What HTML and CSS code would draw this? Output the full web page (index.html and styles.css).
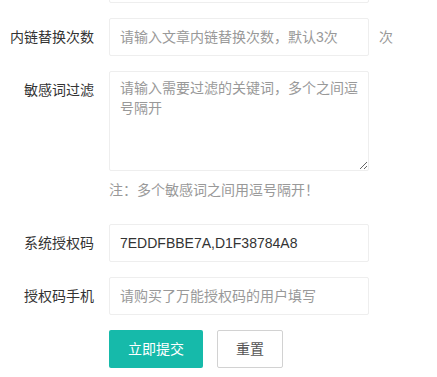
FILE: index.html
```html
<!DOCTYPE html>
<html lang="zh-CN">
<head>
    <meta charset="UTF-8">
    <meta name="viewport" content="width=device-width, initial-scale=1.0">
    <title>设置</title>
    <link rel="stylesheet" href="styles.css">
</head>
<body>
    <form class="form">
        <div class="form-item">
            <div class="form-label"></div>
            <div class="input-block">
                <input type="text" class="input">
            </div>
        </div>
        <div class="form-item">
            <label class="form-label">内链替换次数</label>
            <div class="input-block">
                <input type="text" class="input" placeholder="请输入文章内链替换次数，默认3次">
            </div>
            <div class="word-aux">次</div>
        </div>
        <div class="form-item">
            <label class="form-label">敏感词过滤</label>
            <div class="input-block">
                <textarea class="textarea" placeholder="请输入需要过滤的关键词，多个之间逗号隔开"></textarea>
                <div class="form-mid">注：多个敏感词之间用逗号隔开！</div>
            </div>
        </div>
        <div class="form-item">
            <label class="form-label">系统授权码</label>
            <div class="input-block">
                <input type="text" class="input" value="7EDDFBBE7A,D1F38784A8">
            </div>
        </div>
        <div class="form-item">
            <label class="form-label">授权码手机</label>
            <div class="input-block">
                <input type="text" class="input" placeholder="请购买了万能授权码的用户填写">
            </div>
        </div>
        <div class="form-item">
            <div class="form-label"></div>
            <div class="btns">
                <button type="button" class="btn">立即提交</button>
                <button type="reset" class="btn btn-primary">重置</button>
            </div>
        </div>
    </form>
</body>
</html>
```

FILE: styles.css
```css
body { margin: 0; font-family: "Liberation Sans", "Noto Sans CJK SC", sans-serif; font-size: 14px; color: #333; background: #fff; }
.form { margin-top: -35px; }
.form-item { display: flex; align-items: flex-start; margin-bottom: 15px; }
.form-label { width: 109px; flex: none; box-sizing: border-box; padding: 9px 15px 9px 0; line-height: 20px; text-align: right; white-space: nowrap; }
.input-block { width: 260px; }
.input, .textarea { display: block; width: 100%; box-sizing: border-box; border: 1px solid #eee; border-radius: 2px; background: #fff; color: #333; font: inherit; outline: none; }
.input { height: 38px; line-height: 36px; padding: 0 10px; }
.textarea { min-height: 100px; height: 100px; line-height: 20px; padding: 6px 10px; resize: vertical; }
.input::placeholder, .textarea::placeholder { color: #999; }
.word-aux { padding: 9px 0 9px 10px; line-height: 20px; color: #999; }
.form-mid { padding: 9px 0; line-height: 20px; color: #999; }
.btns { display: flex; gap: 14px; }
.btn { height: 38px; padding: 0 18px; border: 1px solid transparent; border-radius: 2px; background: #16baaa; color: #fff; font: inherit; line-height: 36px; cursor: pointer; }
.btn-primary { background: #fff; border-color: #d2d2d2; color: #555; }
```
